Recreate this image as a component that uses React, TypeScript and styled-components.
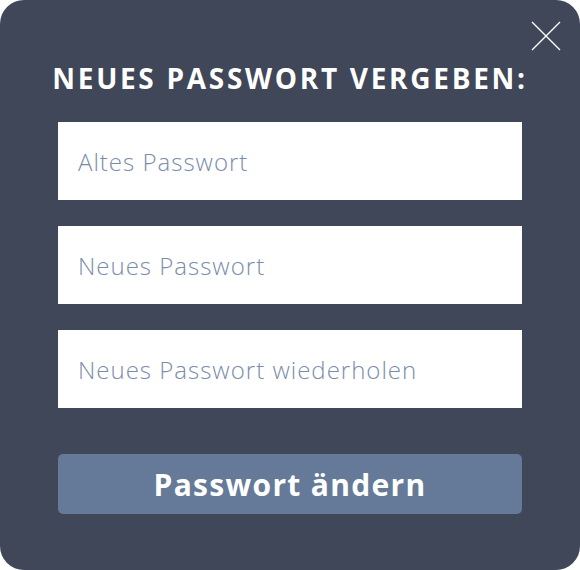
import React from "react";
import styled, { createGlobalStyle } from "styled-components";

const GlobalStyle = createGlobalStyle`
  html, body {
    margin: 0;
    padding: 0;
    background: #ffffff;
  }
  * { box-sizing: border-box; }
`;

const Panel = styled.div`
  position: relative;
  width: 580px;
  height: 570px;
  background: #3f4759;
  border-radius: 24px;
  padding: 58px 58px 0;
  display: flex;
  flex-direction: column;
  align-items: stretch;
  font-family: "Open Sans", "Liberation Sans", sans-serif;
`;

const CloseButton = styled.button`
  position: absolute;
  top: 21px;
  right: 19px;
  width: 30px;
  height: 30px;
  padding: 0;
  border: none;
  background: transparent;
  cursor: pointer;
  display: flex;
  align-items: center;
  justify-content: center;
`;

const Title = styled.h1`
  margin: 0 -30px;
  color: #ffffff;
  font-size: 28px;
  font-weight: 700;
  letter-spacing: 2.7px;
  text-align: center;
  line-height: 40px;
  white-space: nowrap;
`;

const Form = styled.form`
  margin-top: 24px;
  display: flex;
  flex-direction: column;
  gap: 26px;
`;

const Field = styled.input`
  height: 78px;
  width: 100%;
  border: none;
  outline: none;
  background: #ffffff;
  padding: 0 20px;
  font-family: "Open Sans", "Liberation Sans", sans-serif;
  font-size: 24px;
  font-weight: 300;
  letter-spacing: 1px;
  color: #3f4759;

  &::placeholder {
    color: #7b8cab;
    opacity: 1;
  }
`;

const Submit = styled.button`
  margin-top: 20px;
  height: 60px;
  width: 100%;
  border: none;
  border-radius: 5px;
  background: #647a98;
  color: #ffffff;
  font-family: "Open Sans", "Liberation Sans", sans-serif;
  font-size: 30px;
  font-weight: 700;
  letter-spacing: 1.3px;
  cursor: pointer;
`;

const App = () => {
  return (
    <>
      <GlobalStyle />
      <Panel>
        <CloseButton type="button" aria-label="Schließen">
          <svg width="30" height="30" viewBox="0 0 30 30">
            <path d="M1 1 L29 29 M29 1 L1 29" stroke="#ffffff" strokeWidth="1.4" fill="none" />
          </svg>
        </CloseButton>
        <Title>NEUES PASSWORT VERGEBEN:</Title>
        <Form onSubmit={(e) => e.preventDefault()}>
          <Field type="password" placeholder="Altes Passwort" />
          <Field type="password" placeholder="Neues Passwort" />
          <Field type="password" placeholder="Neues Passwort wiederholen" />
          <Submit type="submit">Passwort ändern</Submit>
        </Form>
      </Panel>
    </>
  );
};

export default App;
